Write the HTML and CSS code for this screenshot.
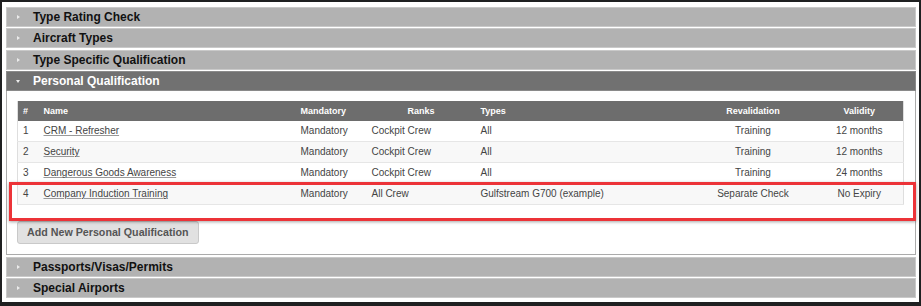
FILE: index.html
```html
<!DOCTYPE html>
<html lang="en">
<head>
  <meta charset="UTF-8">
  <title>Qualifications</title>
  <link rel="stylesheet" href="styles.css">
</head>
<body>
  <div class="frame">
    <div class="section-header"><span class="arrow"></span>Type Rating Check</div>
    <div class="section-header"><span class="arrow"></span>Aircraft Types</div>
    <div class="section-header"><span class="arrow"></span>Type Specific Qualification</div>
    <div class="section-header open"><span class="arrow"></span>Personal Qualification</div>

    <div class="section-body">
      <table class="qual-table">
        <colgroup>
          <col style="width: 21px">
          <col style="width: 257px">
          <col style="width: 71px">
          <col style="width: 109px">
          <col style="width: 215px">
          <col style="width: 125px">
          <col style="width: 88px">
        </colgroup>
        <thead>
          <tr>
            <th>#</th>
            <th>Name</th>
            <th>Mandatory</th>
            <th class="center">Ranks</th>
            <th>Types</th>
            <th class="center">Revalidation</th>
            <th class="center">Validity</th>
          </tr>
        </thead>
        <tbody>
          <tr>
            <td>1</td>
            <td><a href="#">CRM - Refresher</a></td>
            <td>Mandatory</td>
            <td>Cockpit Crew</td>
            <td>All</td>
            <td class="center">Training</td>
            <td class="center">12 months</td>
          </tr>
          <tr>
            <td>2</td>
            <td><a href="#">Security</a></td>
            <td>Mandatory</td>
            <td>Cockpit Crew</td>
            <td>All</td>
            <td class="center">Training</td>
            <td class="center">12 months</td>
          </tr>
          <tr>
            <td>3</td>
            <td><a href="#">Dangerous Goods Awareness</a></td>
            <td>Mandatory</td>
            <td>Cockpit Crew</td>
            <td>All</td>
            <td class="center">Training</td>
            <td class="center">24 months</td>
          </tr>
          <tr>
            <td>4</td>
            <td><a href="#">Company Induction Training</a></td>
            <td>Mandatory</td>
            <td>All Crew</td>
            <td>Gulfstream G700 (example)</td>
            <td class="center">Separate Check</td>
            <td class="center">No Expiry</td>
          </tr>
        </tbody>
      </table>
      <button class="add-button">Add New Personal Qualification</button>
    </div>

    <div class="section-header after"><span class="arrow"></span>Passports/Visas/Permits</div>
    <div class="section-header"><span class="arrow"></span>Special Airports</div>

    <div class="highlight"></div>
  </div>
</body>
</html>
```

FILE: styles.css
```css
body {
  margin: 0;
  font-family: "Liberation Sans", Arial, sans-serif;
  background-color: #fff;
}

.frame {
  position: relative;
  width: 921px;
  height: 306px;
  box-sizing: border-box;
  border: 2px solid #1f2021;
  border-bottom-width: 4px;
  padding: 5px 3px 0 4px;
  overflow: hidden;
  background-color: #fff;
}

.section-header {
  height: 20px;
  box-sizing: border-box;
  margin-bottom: 1.33px;
  padding-left: 26px;
  background-color: #b2b2b2;
  border: 1px solid #c9c9c9;
  color: #111;
  font-size: 12px;
  font-weight: bold;
  line-height: 18px;
  position: relative;
}

.section-header .arrow {
  position: absolute;
  left: 10px;
  top: 7px;
  width: 0;
  height: 0;
  border-top: 2.5px solid transparent;
  border-bottom: 2.5px solid transparent;
  border-left: 3px solid #ececec;
}

.section-header.open {
  margin-bottom: 0;
  background-color: #717171;
  border-color: #8a8a8a;
  color: #fff;
}

.section-header.open .arrow {
  left: 9px;
  top: 8px;
  border-left: 2.5px solid transparent;
  border-right: 2.5px solid transparent;
  border-top: 3px solid #ececec;
  border-bottom: 0;
}

.section-header.after {
  margin-top: 2px;
}

.section-body {
  border: 1px solid #ababab;
  border-top: 0;
  padding: 10px 11px 10px 10px;
  background-color: #fff;
}

.qual-table {
  width: 886px;
  table-layout: fixed;
  border-collapse: collapse;
  border: 1px solid #dedede;
  border-top: 0;
  font-size: 10px;
  color: #444;
}

.qual-table th {
  height: 20px;
  padding: 0 5px;
  background-color: #6d6d6d;
  color: #fff;
  font-size: 9px;
  font-weight: bold;
  text-align: left;
}

.qual-table td {
  height: 20px;
  padding: 0 5px;
  border-bottom: 1px solid #e6e6e6;
  white-space: nowrap;
}

.qual-table tbody tr:nth-child(even) td {
  background-color: #f8f8f8;
}

.qual-table .center {
  text-align: center;
}

.qual-table a {
  color: #444;
  text-decoration: underline;
  text-decoration-color: #999;
}

.add-button {
  display: block;
  margin-top: 16px;
  height: 23px;
  padding: 0 9px;
  background-color: #e1e1e1;
  border: 1px solid #c9c9c9;
  border-radius: 3px;
  color: #555;
  font-family: "Liberation Sans", Arial, sans-serif;
  font-size: 10.7px;
  font-weight: bold;
}

.highlight {
  position: absolute;
  left: 7px;
  top: 180px;
  width: 901px;
  height: 33px;
  border: 3px solid #ec3338;
  box-shadow: 0 1px 3px rgba(0, 0, 0, 0.35);
  pointer-events: none;
}
```
